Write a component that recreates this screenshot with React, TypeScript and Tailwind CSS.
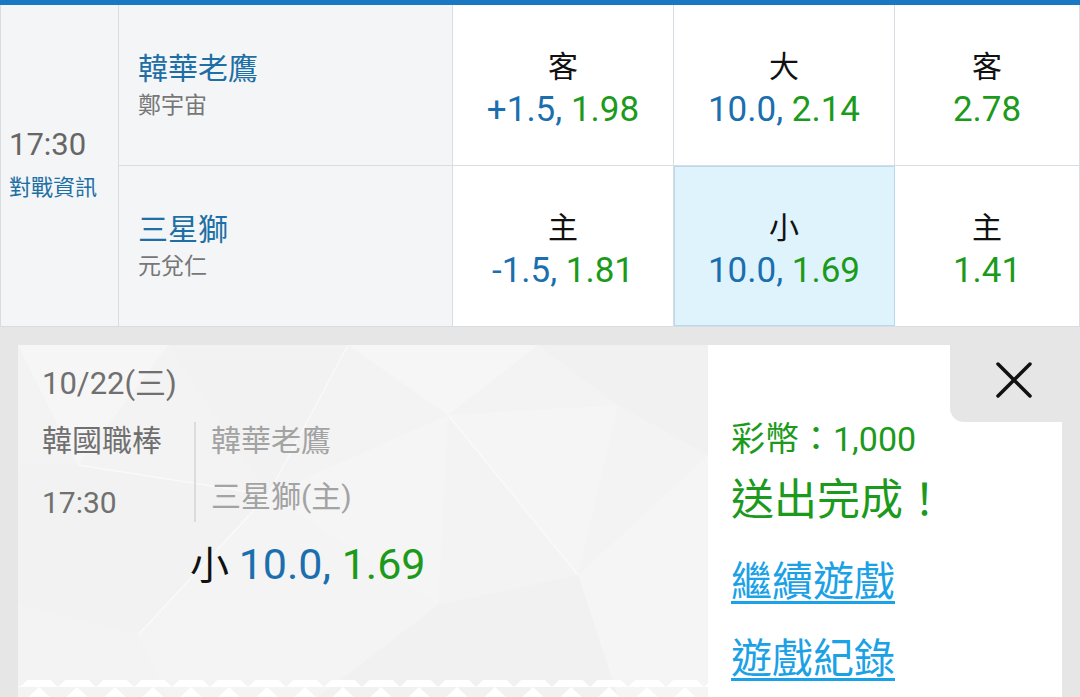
import React from "react";

type Odd = { label: string; line?: string; price: string; selected?: boolean };

const rows: { team: string; pitcher: string; odds: Odd[] }[] = [
  {
    team: "韓華老鷹",
    pitcher: "鄭宇宙",
    odds: [
      { label: "客", line: "+1.5", price: "1.98" },
      { label: "大", line: "10.0", price: "2.14" },
      { label: "客", price: "2.78" },
    ],
  },
  {
    team: "三星獅",
    pitcher: "元兌仁",
    odds: [
      { label: "主", line: "-1.5", price: "1.81" },
      { label: "小", line: "10.0", price: "1.69", selected: true },
      { label: "主", price: "1.41" },
    ],
  },
];

const cellWidths = ["w-[221px]", "w-[221px]", "w-[185px]"];

function OddCell({ odd, width }: { odd: Odd; width: string }) {
  return (
    <div
      className={`${width} flex flex-col items-center justify-center pt-[12px] border-r border-[#d7dde2] ${
        odd.selected ? "bg-[#dff3fc] outline outline-1 outline-[#b9d9ea] -outline-offset-1" : "bg-white"
      }`}
    >
      <div className="text-[30px] leading-[38px] text-[#111]">{odd.label}</div>
      <div className="text-[35px] leading-[48px]">
        {odd.line && <span className="text-[#1b6fae]">{odd.line}, </span>}
        <span className="text-[#1c9a1c]">{odd.price}</span>
      </div>
    </div>
  );
}

function TicketPattern() {
  return (
    <svg className="absolute inset-0 w-full h-full" viewBox="0 0 690 352" preserveAspectRatio="none">
      <rect width="690" height="352" fill="#f3f3f3" />
      <polygon points="0,0 150,0 60,120" fill="#f6f6f6" />
      <polygon points="150,0 330,0 250,150" fill="#f2f2f2" />
      <polygon points="330,0 520,0 430,70" fill="#f6f6f6" />
      <polygon points="520,0 690,0 690,110 600,60" fill="#f1f1f1" />
      <polygon points="430,70 600,60 560,230" fill="#f5f5f5" />
      <polygon points="250,150 430,70 420,260" fill="#f5f5f5" />
      <polygon points="0,120 60,120 250,150 120,290 0,260" fill="#f2f2f2" />
      <polygon points="560,230 690,110 690,352 600,352" fill="#f5f5f5" />
      <polygon points="120,290 250,150 420,260 300,352 150,352" fill="#f4f4f4" />
      <polygon points="420,260 560,230 600,352 300,352" fill="#f1f1f1" />
      <line x1="60" y1="120" x2="250" y2="150" stroke="#f9f9f9" strokeWidth="1.5" />
      <line x1="250" y1="150" x2="330" y2="0" stroke="#f9f9f9" strokeWidth="1.5" />
      <line x1="430" y1="70" x2="560" y2="230" stroke="#f9f9f9" strokeWidth="1.5" />
      <line x1="120" y1="290" x2="250" y2="150" stroke="#f9f9f9" strokeWidth="1.5" />
      <defs>
        <pattern id="zig" x="2" y="0" width="38" height="18" patternUnits="userSpaceOnUse">
          <polygon points="0,18 19,0 38,18" fill="#ffffff" />
        </pattern>
      </defs>
      <rect x="0" y="335" width="690" height="18" fill="url(#zig)" />
    </svg>
  );
}

export default function App() {
  return (
    <div className="w-[1080px] h-[697px] overflow-hidden bg-[#e6e6e6] font-['Roboto','Noto_Sans_CJK_TC',sans-serif]">
      {/* Odds table */}
      <div className="flex h-[327px] border-t-[5px] border-[#1a78c2] border-b border-b-[#d7dde2]">
        <div className="w-[119px] flex flex-col justify-center pl-[8px] pb-[2px] bg-[#f4f5f6] border-l border-r border-[#d7dde2]">
          <div className="text-[31px] leading-[40px] text-[#666]">17:30</div>
          <div className="text-[22px] leading-[34px] mt-[6px] text-[#1d6fa5]">對戰資訊</div>
        </div>
        <div className="flex-1 flex flex-col">
          {rows.map((r, i) => (
            <div key={r.team} className={`flex h-[161px] ${i === 0 ? "border-b border-[#d7dde2]" : ""}`}>
              <div className="w-[334px] flex flex-col justify-center pl-[19px] pt-[2px] bg-[#f4f5f6] border-r border-[#d7dde2]">
                <div className="text-[30px] leading-[40px] text-[#1d6fa5]">{r.team}</div>
                <div className="text-[23px] leading-[34px] text-[#777]">{r.pitcher}</div>
              </div>
              {r.odds.map((o, j) => (
                <OddCell key={j} odd={o} width={cellWidths[j]} />
              ))}
            </div>
          ))}
        </div>
      </div>

      {/* Bet ticket */}
      <div className="mx-[18px] mt-[18px] h-[352px] flex">
        <div className="relative w-[690px] h-full">
          <TicketPattern />
          <div className="relative pl-[24px] pt-[19px]">
            <div className="text-[31px] leading-[40px] text-[#707070]">10/22(三)</div>
            <div className="flex mt-[18px]">
              <div className="w-[152px] flex flex-col">
                <div className="text-[30px] leading-[38px] text-[#707070]">韓國職棒</div>
                <div className="text-[30px] leading-[38px] text-[#707070] mt-[24px]">17:30</div>
              </div>
              <div className="border-l-2 border-[#dcdcdc] pl-[15px] flex flex-col pb-[4px]">
                <div className="text-[30px] leading-[38px] text-[#a3a3a3]">韓華老鷹</div>
                <div className="text-[30px] leading-[38px] text-[#a3a3a3] mt-[18px]">三星獅(主)</div>
              </div>
            </div>
            <div className="pl-[148px] mt-[18px] text-[43px] leading-[48px]">
              <span className="text-[#111] text-[39px]">小 </span>
              <span className="text-[#1b6fae]">10.0, </span>
              <span className="text-[#1c9a1c]">1.69</span>
            </div>
          </div>
        </div>
        <div className="relative flex-1 bg-white pl-[23px] pt-[72px]">
          <button
            type="button"
            className="absolute top-0 right-0 w-[112px] h-[77px] bg-[#e6e6e6] rounded-bl-[14px] flex items-center justify-center pl-[16px] pb-[8px]"
            aria-label="close"
          >
            <svg width="38" height="38" viewBox="0 0 38 38">
              <path d="M3 3 L35 35 M35 3 L3 35" stroke="#111" strokeWidth="3.5" strokeLinecap="round" />
            </svg>
          </button>
          <div className="text-[34px] leading-[44px] text-[#1c9a1c]">彩幣：1,000</div>
          <div className="text-[43px] leading-[54px] text-[#1c9a1c] mt-[12px]">送出完成！</div>
          <div className="mt-[30px]">
            <a href="#" className="text-[41px] leading-[50px] text-[#1ba1e6] underline decoration-[3px] underline-offset-[5px]">
              繼續遊戲
            </a>
          </div>
          <div className="mt-[27px]">
            <a href="#" className="text-[41px] leading-[50px] text-[#1ba1e6] underline decoration-[3px] underline-offset-[5px]">
              遊戲紀錄
            </a>
          </div>
        </div>
      </div>
    </div>
  );
}
